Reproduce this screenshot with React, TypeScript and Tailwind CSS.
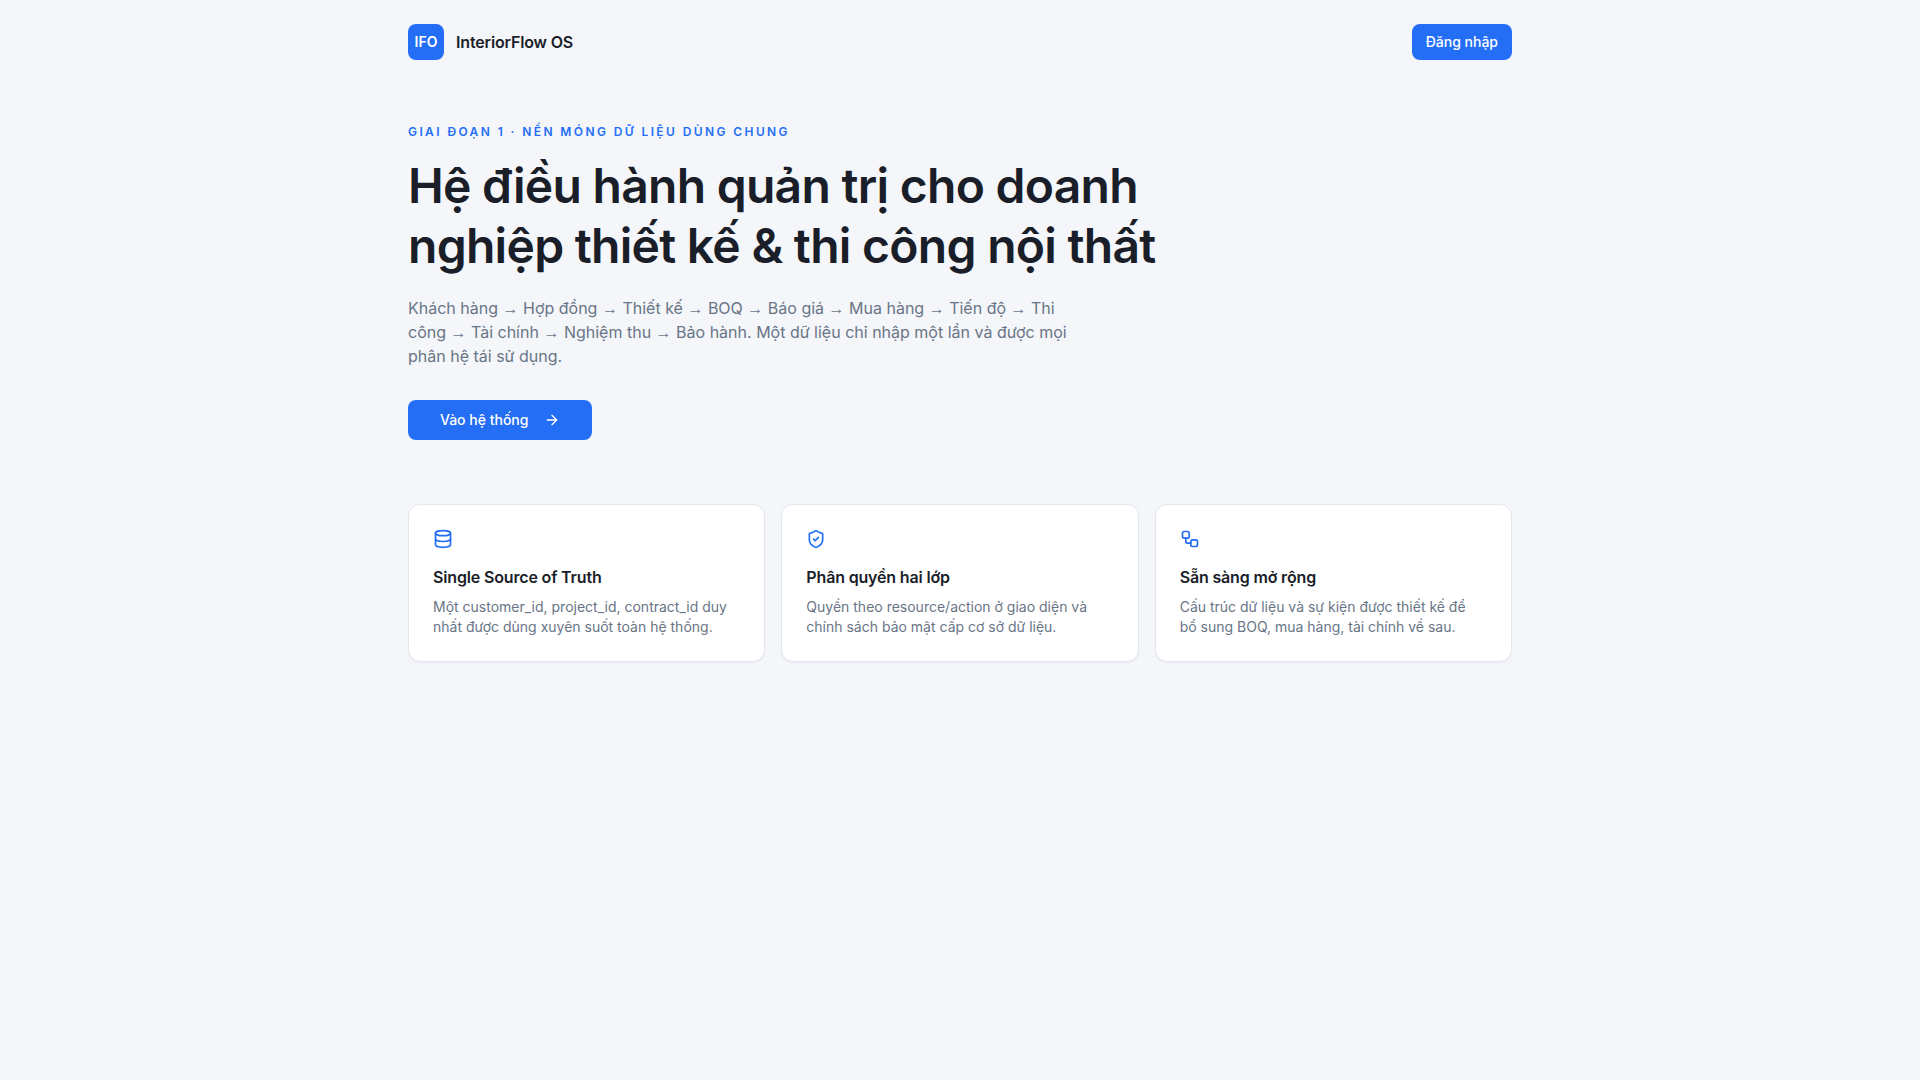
import React from 'react';
import { ArrowRight, Database, ShieldCheck, Workflow } from 'lucide-react';

const steps = [
  'Khách hàng',
  'Hợp đồng',
  'Thiết kế',
  'BOQ',
  'Báo giá',
  'Mua hàng',
  'Tiến độ',
  'Thi công',
  'Tài chính',
  'Nghiệm thu',
  'Bảo hành',
];

const features = [
  {
    icon: Database,
    title: 'Single Source of Truth',
    description: 'Một customer_id, project_id, contract_id duy nhất được dùng xuyên suốt toàn hệ thống.',
  },
  {
    icon: ShieldCheck,
    title: 'Phân quyền hai lớp',
    description: 'Quyền theo resource/action ở giao diện và chính sách bảo mật cấp cơ sở dữ liệu.',
  },
  {
    icon: Workflow,
    title: 'Sẵn sàng mở rộng',
    description: 'Cấu trúc dữ liệu và sự kiện được thiết kế để bổ sung BOQ, mua hàng, tài chính về sau.',
  },
];

const App: React.FC = () => {
  return (
    <div className="min-h-screen bg-[#f4f6fa] font-['Inter',sans-serif] text-[#1a1e29] antialiased">
      <header className="max-w-6xl mx-auto px-6 py-6 flex items-center justify-between">
        <div className="flex items-center gap-3">
          <div className="flex h-9 w-9 items-center justify-center rounded-lg bg-[#246ef5] text-sm font-semibold text-white">
            IFO
          </div>
          <span className="font-semibold tracking-[-0.01em]">InteriorFlow OS</span>
        </div>
        <a
          href="#login"
          className="inline-flex h-9 items-center justify-center rounded-lg bg-[#246ef5] px-3.5 text-sm font-medium text-white hover:bg-[#1d62e0]"
        >
          Đăng nhập
        </a>
      </header>

      <main className="max-w-6xl mx-auto px-6 pt-10 pb-16">
        <p className="text-xs font-semibold uppercase tracking-[0.2em] text-[#246ef5]">
          Giai đoạn 1 · Nền móng dữ liệu dùng chung
        </p>
        <h1 className="mt-4 max-w-3xl text-5xl leading-tight font-semibold tracking-[-0.015em]">
          Hệ điều hành quản trị cho doanh nghiệp thiết kế &amp; thi công nội thất
        </h1>
        <p className="mt-5 max-w-2xl text-base text-[#697586]">
          {steps.map((step, i) => (
            <React.Fragment key={step}>
              {i > 0 && (
                <>
                  {' '}
                  <span className="font-['Liberation_Sans',sans-serif] leading-none">→</span>{' '}
                </>
              )}
              {step}
            </React.Fragment>
          ))}
          . Một dữ liệu chỉ nhập một lần và được mọi phân hệ tái sử dụng.
        </p>
        <div className="mt-8 flex">
          <a
            href="#app"
            className="inline-flex h-10 items-center justify-center gap-2 rounded-lg bg-[#246ef5] px-8 text-sm font-medium text-white hover:bg-[#1d62e0]"
          >
            Vào hệ thống
            <ArrowRight className="ml-2 h-4 w-4" />
          </a>
        </div>

        {/* Feature cards */}
        <div className="mt-16 grid gap-4 md:grid-cols-3">
          {features.map(({ icon: Icon, title, description }) => (
            <div key={title} className="rounded-xl border border-[#e2e6ee] bg-white p-6 shadow-xs">
              <Icon className="h-5 w-5 text-[#246ef5]" />
              <h2 className="mt-4 font-semibold tracking-[-0.01em]">{title}</h2>
              <p className="mt-2 pr-2 text-sm text-[#697586]">{description}</p>
            </div>
          ))}
        </div>
      </main>
    </div>
  );
};

export default App;
